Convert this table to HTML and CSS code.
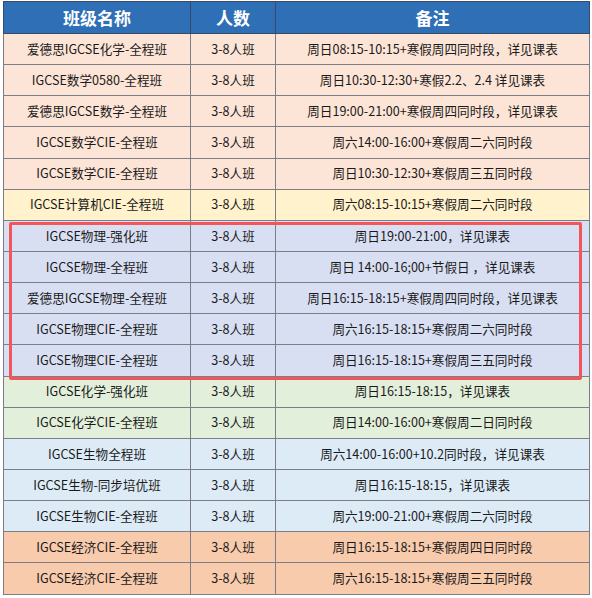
FILE: index.html
```html
<!DOCTYPE html>
<html lang="zh">
<head>
<meta charset="utf-8">
<link rel="stylesheet" href="styles.css">
</head>
<body>
<div class="wrap">
<table class="sched">
<colgroup><col class="c1"><col class="c2"><col class="c3"></colgroup>
<thead>
<tr><th>班级名称</th><th>人数</th><th>备注</th></tr>
</thead>
<tbody>
<tr class="peach"><td>爱德思IGCSE化学-全程班</td><td>3-8人班</td><td>周日08:15-10:15+寒假周四同时段，详见课表</td></tr>
<tr class="peach"><td>IGCSE数学0580-全程班</td><td>3-8人班</td><td>周日10:30-12:30+寒假2.2、2.4 详见课表</td></tr>
<tr class="peach"><td>爱德思IGCSE数学-全程班</td><td>3-8人班</td><td>周日19:00-21:00+寒假周四同时段，详见课表</td></tr>
<tr class="peach"><td>IGCSE数学CIE-全程班</td><td>3-8人班</td><td>周六14:00-16:00+寒假周二六同时段</td></tr>
<tr class="peach"><td>IGCSE数学CIE-全程班</td><td>3-8人班</td><td>周日10:30-12:30+寒假周三五同时段</td></tr>
<tr class="yellow"><td>IGCSE计算机CIE-全程班</td><td>3-8人班</td><td>周六08:15-10:15+寒假周二六同时段</td></tr>
<tr class="lav"><td>IGCSE物理-强化班</td><td>3-8人班</td><td>周日19:00-21:00，详见课表</td></tr>
<tr class="lav"><td>IGCSE物理-全程班</td><td>3-8人班</td><td>周日 14:00-16;00+节假日 ，详见课表</td></tr>
<tr class="lav"><td>爱德思IGCSE物理-全程班</td><td>3-8人班</td><td>周日16:15-18:15+寒假周四同时段，详见课表</td></tr>
<tr class="lav"><td>IGCSE物理CIE-全程班</td><td>3-8人班</td><td>周六16:15-18:15+寒假周二六同时段</td></tr>
<tr class="lav"><td>IGCSE物理CIE-全程班</td><td>3-8人班</td><td>周日16:15-18:15+寒假周三五同时段</td></tr>
<tr class="green"><td>IGCSE化学-强化班</td><td>3-8人班</td><td>周日16:15-18:15，详见课表</td></tr>
<tr class="green"><td>IGCSE化学CIE-全程班</td><td>3-8人班</td><td>周日14:00-16:00+寒假周二日同时段</td></tr>
<tr class="blue"><td>IGCSE生物全程班</td><td>3-8人班</td><td>周六14:00-16:00+10.2同时段，详见课表</td></tr>
<tr class="blue"><td>IGCSE生物-同步培优班</td><td>3-8人班</td><td>周日16:15-18:15，详见课表</td></tr>
<tr class="blue"><td>IGCSE生物CIE-全程班</td><td>3-8人班</td><td>周六19:00-21:00+寒假周二六同时段</td></tr>
<tr class="orange"><td>IGCSE经济CIE-全程班</td><td>3-8人班</td><td>周日16:15-18:15+寒假周四日同时段</td></tr>
<tr class="orange"><td>IGCSE经济CIE-全程班</td><td>3-8人班</td><td>周六16:15-18:15+寒假周三五同时段</td></tr>
</tbody>
</table>
<div class="highlight"></div>
</div>
</body>
</html>
```
FILE: styles.css
```css
html, body {
  margin: 0;
  padding: 0;
  background: #ffffff;
}
.wrap {
  position: relative;
  margin: 1px 0 0 3px;
  width: 586px;
}
.sched {
  border-collapse: collapse;
  width: 586px;
  table-layout: fixed;
  font-family: "Noto Sans CJK SC", "Noto Sans", sans-serif;
  color: #1a1a1a;
  border: 1.5px solid #4a4a55;
}
.c1 { width: 187px; }
.c2 { width: 85px; }
.c3 { width: 314px; }
.sched th {
  background: #2f6fb6;
  color: #ffffff;
  font-size: 17px;
  font-weight: 700;
  height: 31px;
  padding: 0;
  border: 1px solid #3a4a66;
  text-align: center;
  line-height: 1;
}
.sched td {
  height: 30.15px;
  padding: 0;
  border: 1px solid #7d7d85;
  text-align: center;
  font-size: 12.6px;
  line-height: 1;
  white-space: nowrap;
}
.peach td { background: #fce4d6; }
.yellow td { background: #fff2cc; }
.lav td { background: #d9dff2; }
.green td { background: #e2efda; }
.blue td { background: #ddebf7; }
.orange td { background: #f8cbad; }
.highlight {
  position: absolute;
  left: 6px;
  top: 221px;
  width: 567px;
  height: 152px;
  border: 3px solid #f2555a;
  border-radius: 2px;
  pointer-events: none;
}
```
